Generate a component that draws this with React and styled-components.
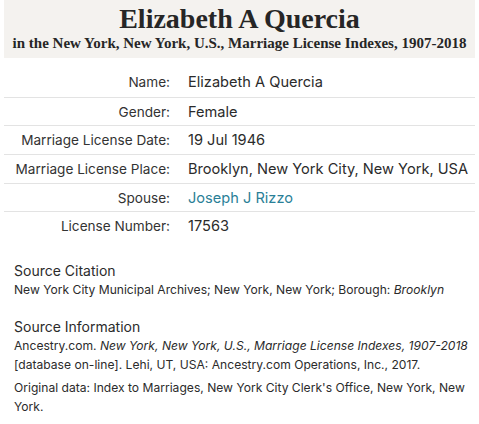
import styled, { createGlobalStyle } from 'styled-components';

const GlobalStyle = createGlobalStyle`
  body {
    margin: 0;
    background: #fff;
    font-family: Inter, "Liberation Sans", Arial, sans-serif;
    color: #2b2b2b;
  }
`;

const Page = styled.div`
  width: 479px;
  padding: 0 4px;
  box-sizing: border-box;
`;

const Header = styled.header`
  background: #f4f2ef;
  height: 58px;
  text-align: center;
  font-family: "Liberation Serif", "Times New Roman", serif;
  font-weight: bold;
  color: #262626;
  padding-top: 4px;
  box-sizing: border-box;
`;

const Title = styled.h1`
  margin: 0;
  font-size: 28px;
  line-height: 30px;
`;

const Subtitle = styled.div`
  font-size: 15px;
  line-height: 18px;
  white-space: nowrap;
`;

const Table = styled.div`
  margin-top: 10px;
`;

const Row = styled.div`
  display: grid;
  grid-template-columns: 166px 1fr;
  column-gap: 18px;
  align-items: center;
  height: 28.7px;
  box-sizing: border-box;
  border-top: ${(p) => (p.$first ? 'none' : '1px solid #e3e3e3')};
`;

const Label = styled.div`
  text-align: right;
  font-size: 13.6px;
  color: #333;
  white-space: nowrap;
`;

const Value = styled.div`
  font-size: 14.6px;
  color: ${(p) => (p.$link ? '#2a7f97' : '#2b2b2b')};
  white-space: nowrap;
`;

const Source = styled.section`
  margin-top: 22px;
  padding: 0 6px 0 10px;
`;

const Heading = styled.h3`
  margin: 0 0 1px;
  font-size: 14px;
  font-weight: normal;
  line-height: 18px;
`;

const Text = styled.p`
  margin: 0 0 ${(p) => p.$gap || 0}px;
  font-size: 12.1px;
  line-height: 18.7px;
  color: #2b2b2b;
`;

const rows = [
  ['Name:', 'Elizabeth A Quercia'],
  ['Gender:', 'Female'],
  ['Marriage License Date:', '19 Jul 1946'],
  ['Marriage License Place:', 'Brooklyn, New York City, New York, USA'],
  ['Spouse:', 'Joseph J Rizzo', true],
  ['License Number:', '17563'],
];

export default function App() {
  return (
    <Page>
      <GlobalStyle />
      <Header>
        <Title>Elizabeth A Quercia</Title>
        <Subtitle>in the New York, New York, U.S., Marriage License Indexes, 1907-2018</Subtitle>
      </Header>
      <Table>
        {rows.map(([label, value, link], i) => (
          <Row key={label} $first={i === 0}>
            <Label>{label}</Label>
            <Value $link={link}>{value}</Value>
          </Row>
        ))}
      </Table>
      <Source>
        <Heading>Source Citation</Heading>
        <Text $gap={18}>
          New York City Municipal Archives; New York, New York; Borough: <i>Brooklyn</i>
        </Text>
        <Heading>Source Information</Heading>
        <Text $gap={5}>
          Ancestry.com. <i>New York, New York, U.S., Marriage License Indexes, 1907-2018</i>
          <br />
          [database on-line]. Lehi, UT, USA: Ancestry.com Operations, Inc., 2017.
        </Text>
        <Text>
          Original data: Index to Marriages, New York City Clerk's Office, New York, New York.
        </Text>
      </Source>
    </Page>
  );
}
